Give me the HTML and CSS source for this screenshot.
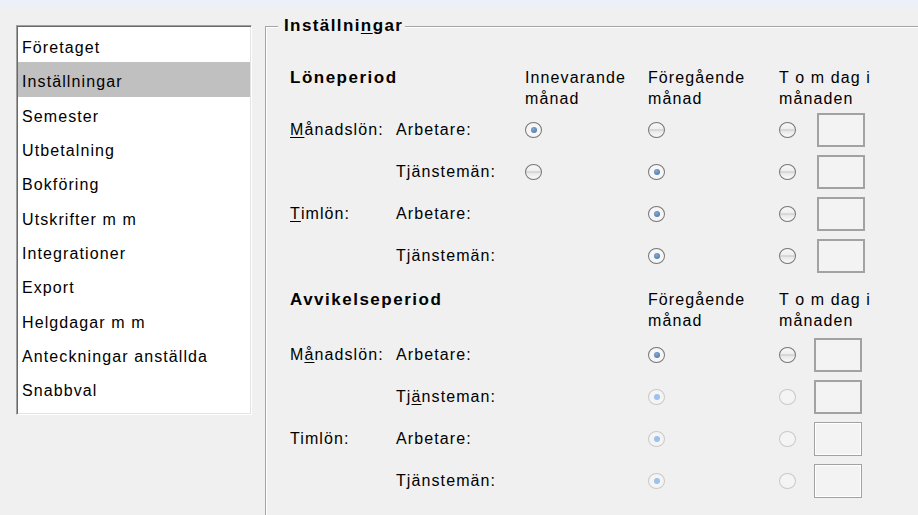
FILE: index.html
```html
<!DOCTYPE html>
<html lang="sv">
<head>
<meta charset="utf-8">
<title>Inställningar</title>
<link rel="stylesheet" href="styles.css">
</head>
<body>
<div class="topbar"></div>
<div class="main">
  <ul class="nav">
    <li>Företaget</li>
    <li class="sel">Inställningar</li>
    <li>Semester</li>
    <li>Utbetalning</li>
    <li>Bokföring</li>
    <li>Utskrifter m m</li>
    <li>Integrationer</li>
    <li>Export</li>
    <li>Helgdagar m m</li>
    <li>Anteckningar anställda</li>
    <li>Snabbval</li>
  </ul>
  <fieldset class="group">
    <legend>Inställni<u>n</u>gar</legend>

    <div class="sec sec1">
      <div class="head title wide2">Löneperiod</div>
      <div class="head">Innevarande<br>månad</div>
      <div class="head">Föregående<br>månad</div>
      <div class="head">T o m dag i<br>månaden</div>

      <div class="lbl"><u>M</u>ånadslön:</div>
      <div class="lbl">Arbetare:</div>
      <div class="cell"><span class="radio on"></span></div>
      <div class="cell"><span class="radio"></span></div>
      <div class="cell day"><span class="radio"></span><span class="box"></span></div>

      <div class="lbl"></div>
      <div class="lbl">Tjänstemän:</div>
      <div class="cell"><span class="radio"></span></div>
      <div class="cell"><span class="radio on"></span></div>
      <div class="cell day"><span class="radio"></span><span class="box"></span></div>

      <div class="lbl"><u>T</u>imlön:</div>
      <div class="lbl">Arbetare:</div>
      <div class="cell"></div>
      <div class="cell"><span class="radio on"></span></div>
      <div class="cell day"><span class="radio"></span><span class="box"></span></div>

      <div class="lbl"></div>
      <div class="lbl">Tjänstemän:</div>
      <div class="cell"></div>
      <div class="cell"><span class="radio on"></span></div>
      <div class="cell day"><span class="radio"></span><span class="box"></span></div>
    </div>

    <div class="sec sec2">
      <div class="head title wide3">Avvikelseperiod</div>
      <div class="head">Föregående<br>månad</div>
      <div class="head">T o m dag i<br>månaden</div>

      <div class="lbl">M<u>å</u>nadslön:</div>
      <div class="lbl">Arbetare:</div>
      <div class="cell"></div>
      <div class="cell"><span class="radio on"></span></div>
      <div class="cell day"><span class="radio"></span><span class="box"></span></div>

      <div class="lbl"></div>
      <div class="lbl">Tj<u>ä</u>nsteman:</div>
      <div class="cell"></div>
      <div class="cell"><span class="radio on dis"></span></div>
      <div class="cell day"><span class="radio dis"></span><span class="box"></span></div>

      <div class="lbl">Timlön:</div>
      <div class="lbl">Arbetare:</div>
      <div class="cell"></div>
      <div class="cell"><span class="radio on dis"></span></div>
      <div class="cell day"><span class="radio dis"></span><span class="box dis"></span></div>

      <div class="lbl"></div>
      <div class="lbl">Tjänstemän:</div>
      <div class="cell"></div>
      <div class="cell"><span class="radio on dis"></span></div>
      <div class="cell day"><span class="radio dis"></span><span class="box dis"></span></div>
    </div>
  </fieldset>
</div>
</body>
</html>
```

FILE: styles.css
```css
html, body {
  margin: 0;
  padding: 0;
}
body {
  width: 918px;
  height: 515px;
  overflow: hidden;
  background: #f0f0f0;
  color: #000;
  font-family: "Liberation Sans", Arial, sans-serif;
  font-size: 16px;
  letter-spacing: 1.1px;
}
.topbar {
  height: 8px;
  background: #ecf1f9;
}
.main {
  display: flex;
  align-items: flex-start;
  padding-top: 8px;
}

/* left list */
.nav {
  list-style: none;
  margin: 9px 0 0 16px;
  width: 236px;
  height: 390px;
  box-sizing: border-box;
  background: #fff;
  border: 1px solid;
  border-color: #a0a0a0 #ffffff #ffffff #a0a0a0;
  box-shadow: inset 1px 1px 0 #696969, inset -1px -1px 0 #e3e3e3;
  padding: 2px 1px 1px 1px;
}
.nav li {
  height: 34.3px;
  box-sizing: border-box;
  display: flex;
  align-items: center;
  padding: 6px 0 0 4px;
}
.nav li.sel {
  background: #c0c0c0;
}

/* group box */
.group {
  flex: 1;
  margin: 0 -20px 0 13px;
  padding: 31px 0 0 24px;
  min-width: 0;
  height: 600px;
  border: 1px solid #a5a5a5;
  border-right: none;
  border-bottom: none;
  box-shadow: inset 1px 1px 0 #ffffff;
}
.group legend {
  margin-left: -12px;
  padding: 0 2px 0 6px;
  font-weight: bold;
  font-size: 17px;
  line-height: 20px;
  letter-spacing: 1.4px;
  background: #f0f0f0;
}

.sec {
  display: grid;
  grid-template-columns: 106px 129px 123px 131px auto;
  grid-auto-rows: 42px;
}
.sec1 {
  grid-template-rows: 42px;
}
.sec2 {
  margin-top: 12px;
  grid-template-rows: 45px;
}
.head {
  line-height: 21px;
  align-self: start;
}
.title {
  font-weight: bold;
  font-size: 17px;
  letter-spacing: 1.5px;
}
.wide2 { grid-column: 1 / 3; }
.wide3 { grid-column: 1 / 4; }

.lbl {
  display: flex;
  align-items: center;
  white-space: nowrap;
}
.cell {
  display: flex;
  align-items: center;
}
.day {
  gap: 21px;
}
.sec2 .day {
  gap: 18px;
}

.radio {
  width: 15px;
  height: 14px;
  border: 1.6px solid #767676;
  border-radius: 50%;
  position: relative;
  background: linear-gradient(#f8f8f8 0%, #efefef 40%, #cdcdcd 50%, #e9e9e9 60%, #fbfbfb 100%);
}
.radio.on {
  background: #f6f6f6;
}
.radio.on::after {
  content: "";
  position: absolute;
  left: 4.5px;
  top: 4px;
  width: 6px;
  height: 6px;
  border-radius: 50%;
  background: radial-gradient(circle at 40% 35%, #86a8d0, #44709e);
}
.radio.dis {
  border-color: #c9c9c9;
  background: #f4f4f4;
}
.radio.dis.on::after {
  background: #9dc1ea;
}

.box {
  width: 44px;
  height: 30px;
  border: 2px solid #a2a2a2;
  background: #f3f3f3;
}
.box.dis {
  border: 1px solid #a2a2a2;
  box-shadow: inset 1px 1px 0 #fff, inset -1px -1px 0 #fff;
  width: 46px;
  height: 32px;
}
u {
  text-decoration-thickness: 1px;
  text-underline-offset: 2px;
}
```
